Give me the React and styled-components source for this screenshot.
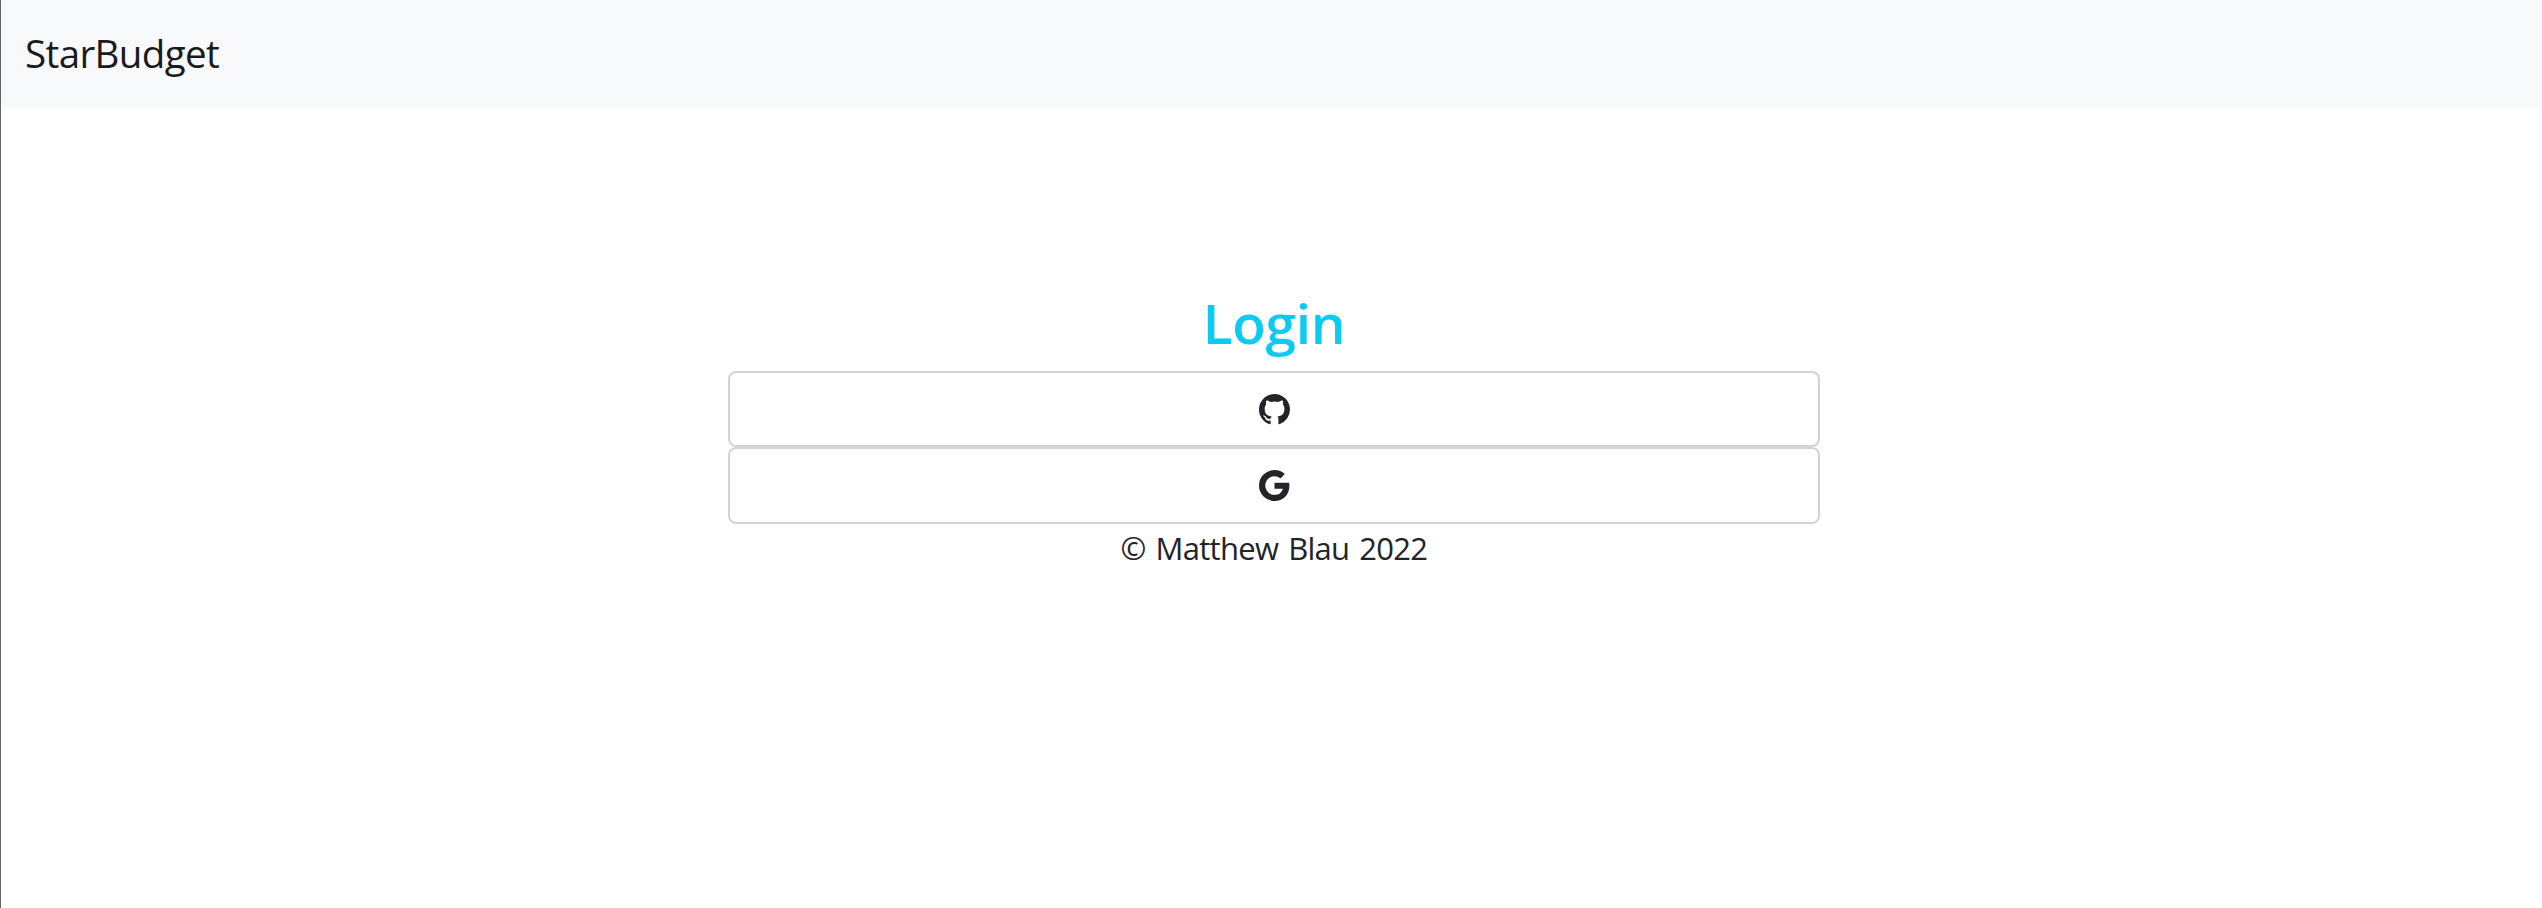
import React from "react";
import styled, { createGlobalStyle } from "styled-components";
import { BsGithub, BsGoogle } from "react-icons/bs";

const GlobalStyle = createGlobalStyle`
  *, *::before, *::after { box-sizing: border-box; }
  body {
    margin: 0;
    background: #fff;
    color: #212529;
    font-family: "Segoe UI", "Open Sans", "Noto Sans", sans-serif;
    font-size: 32px;
    font-weight: 400;
    line-height: 48px;
  }
`;

const Page = styled.div`
  min-height: 100vh;
  border-left: 1px solid #666;
`;

const Navbar = styled.nav`
  display: flex;
  align-items: center;
  height: 109px;
  padding: 0 24px 3px;
  background: #f8f9fb;
`;

const Brand = styled.a`
  color: #1a1b1c;
  font-size: 38.5px;
  line-height: 60px;
  letter-spacing: -0.6px;
`;

const Main = styled.main`
  display: flex;
  flex-direction: column;
  align-items: center;
  width: 1092px;
  margin: 180px 0 0 727px;
`;

const Title = styled.h1`
  margin: 0 0 15px;
  color: #0dcaf0;
  font-size: 55px;
  font-weight: 600;
  line-height: 67px;
  letter-spacing: -0.3px;
`;

const LoginButton = styled.button`
  display: flex;
  align-items: center;
  justify-content: center;
  width: 100%;
  height: ${({ $height }) => $height}px;
  padding: 0;
  border: 2px solid #ced4da;
  border-radius: 8px;
  background: #fff;
  color: #212529;

  svg {
    display: block;
    width: 31px;
    height: 31px;
  }
`;

const Footer = styled.footer`
  font-size: 31px;
  letter-spacing: -0.7px;
  word-spacing: 2.5px;
`;

export default function App() {
  return (
    <>
      <GlobalStyle />
      <Page>
        <Navbar>
          <Brand>StarBudget</Brand>
        </Navbar>
        <Main>
          <Title>Login</Title>
          <LoginButton $height={76} aria-label="Log in with GitHub">
            <BsGithub />
          </LoginButton>
          <LoginButton $height={77} aria-label="Log in with Google">
            <BsGoogle />
          </LoginButton>
          <Footer>© Matthew Blau 2022</Footer>
        </Main>
      </Page>
    </>
  );
}
